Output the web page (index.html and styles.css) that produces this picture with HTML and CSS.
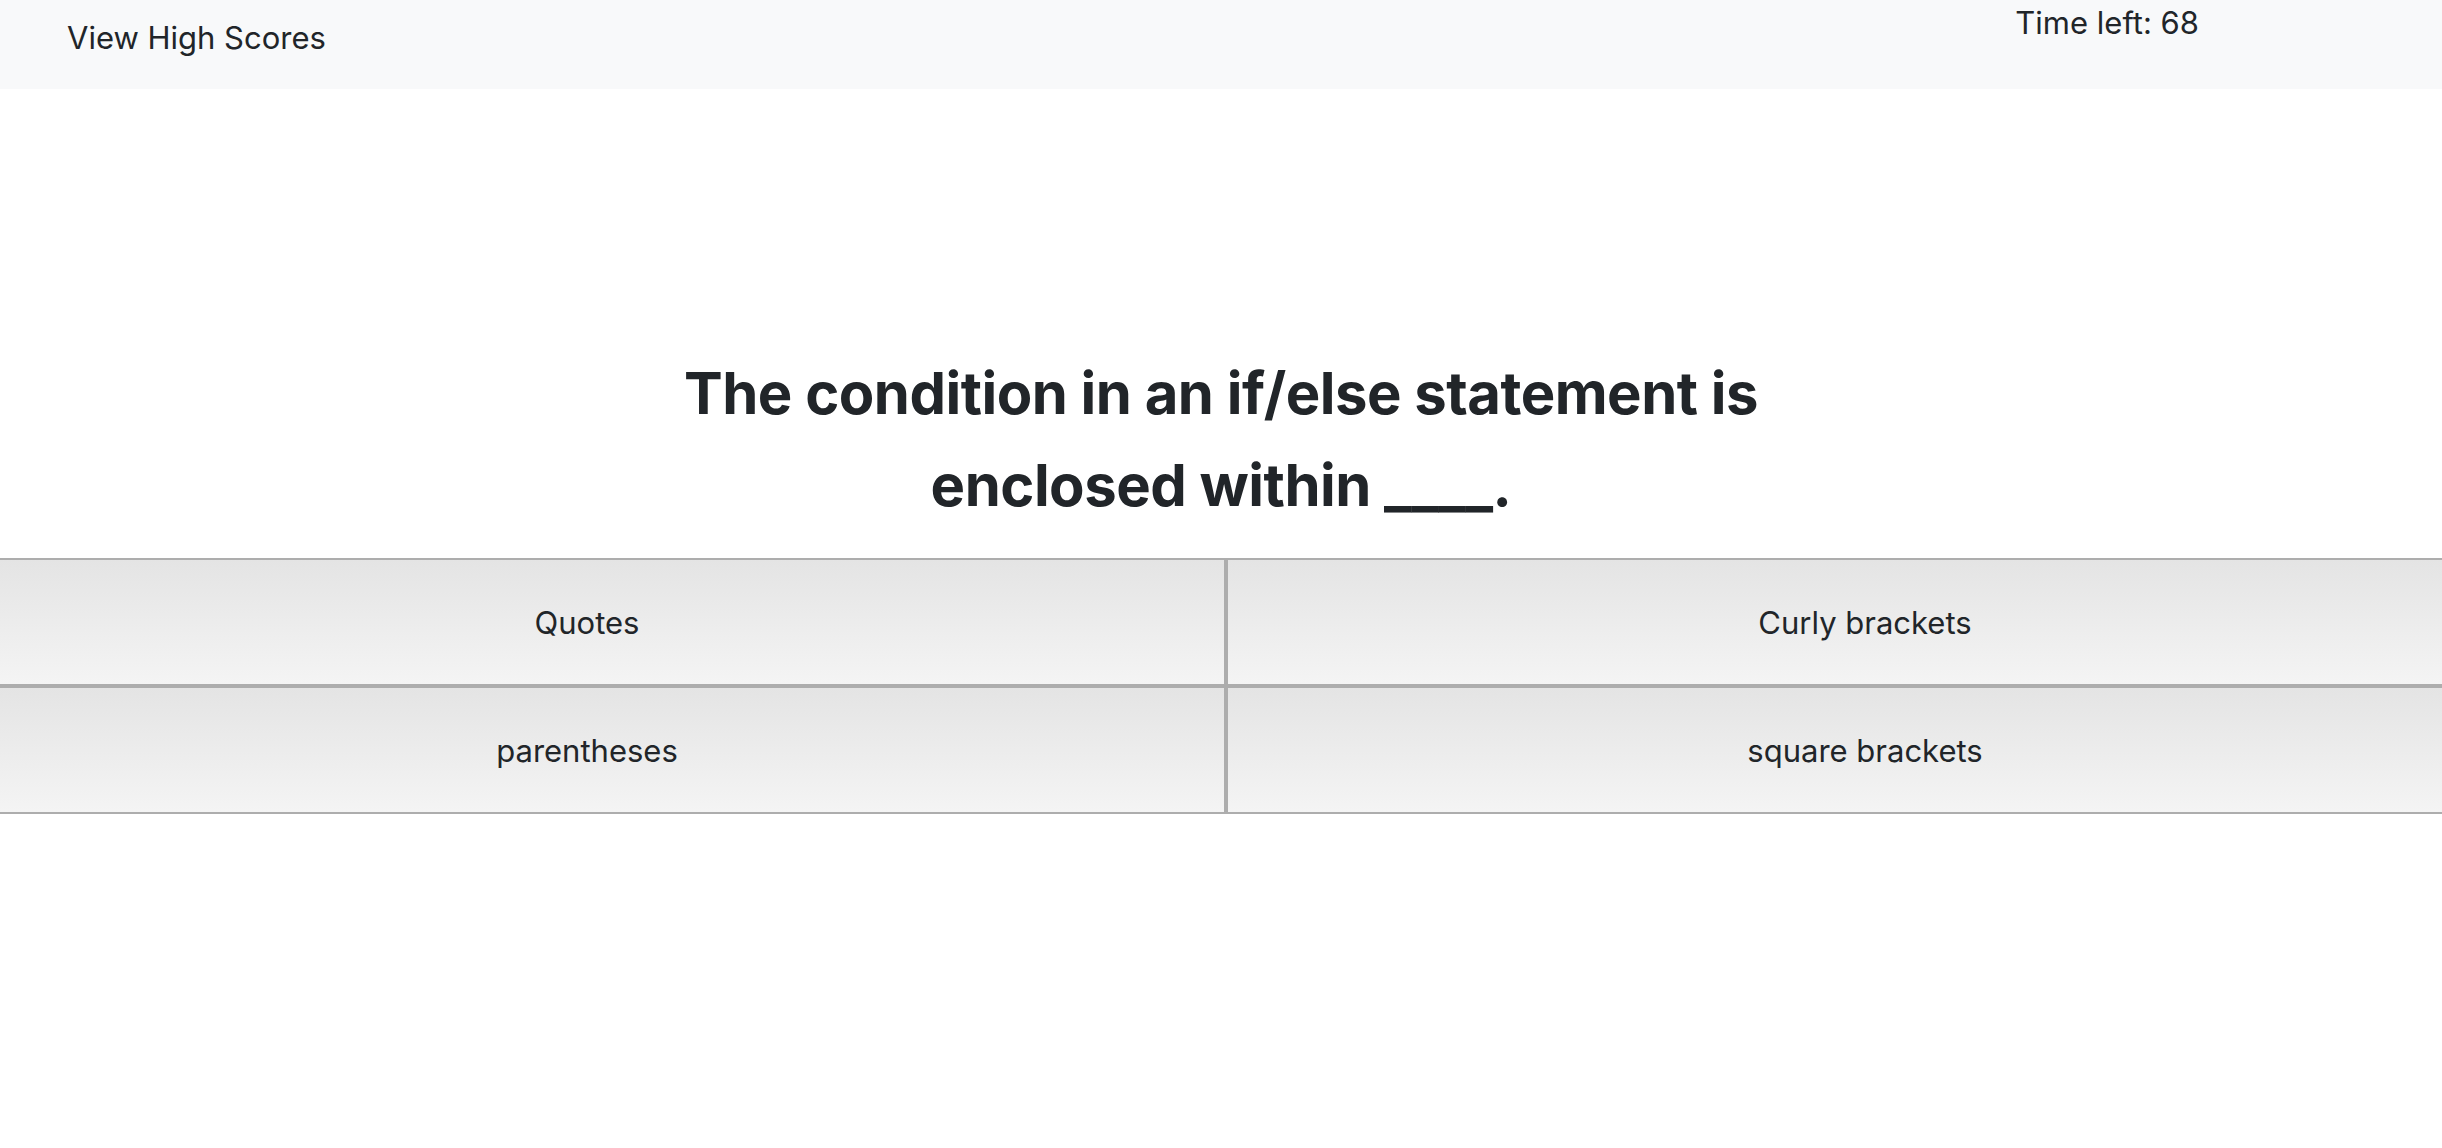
FILE: index.html
```html
<!DOCTYPE html>
<html lang="en">
<head>
<meta charset="utf-8">
<title>Code Quiz</title>
<link rel="stylesheet" href="styles.css">
</head>
<body>
<div class="page">
  <header class="topbar">
    <a class="scores-link" href="#">View High Scores</a>
    <div class="timer">Time left: 68</div>
  </header>
  <main class="quiz">
    <h1 class="question">The condition in an if/else statement is<br>enclosed within ____.</h1>
    <div class="answers">
      <button class="answer">Quotes</button>
      <button class="answer">Curly brackets</button>
      <button class="answer">parentheses</button>
      <button class="answer">square brackets</button>
    </div>
  </main>
</div>
</body>
</html>
```

FILE: styles.css
```css
html, body {
  margin: 0;
  padding: 0;
  background: #ffffff;
}

body {
  font-family: Inter, "Noto Sans", "Liberation Sans", sans-serif;
  color: #212529;
}

.page {
  width: 100%;
  min-height: 1148px;
  overflow: hidden;
}

.topbar {
  height: 89px;
  background: #f8f9fa;
  display: flex;
  justify-content: space-between;
  align-items: flex-start;
  padding: 0 243px 0 67px;
  box-sizing: border-box;
}

.scores-link {
  font-size: 31px;
  line-height: 40px;
  margin-top: 18px;
  color: #212529;
  text-decoration: none;
}

.timer {
  font-size: 31px;
  line-height: 40px;
  margin-top: 3px;
}

.quiz {
  padding-top: 258px;
}

.question {
  margin: 0 0 27px;
  text-align: center;
  font-size: 58px;
  line-height: 92px;
  font-weight: 700;
  letter-spacing: -0.5px;
}

.answers {
  display: grid;
  grid-template-columns: 1fr 1fr;
  margin: 0 -62px 0 -52px;
}

.answer {
  height: 128px;
  border: 2px solid #adadad;
  background: linear-gradient(to bottom, #e4e4e4 0%, #f4f4f4 100%);
  font-family: Inter, "Noto Sans", "Liberation Sans", sans-serif;
  font-size: 31px;
  color: #212529;
  padding: 0;
  margin: 0;
  cursor: pointer;
}
```
